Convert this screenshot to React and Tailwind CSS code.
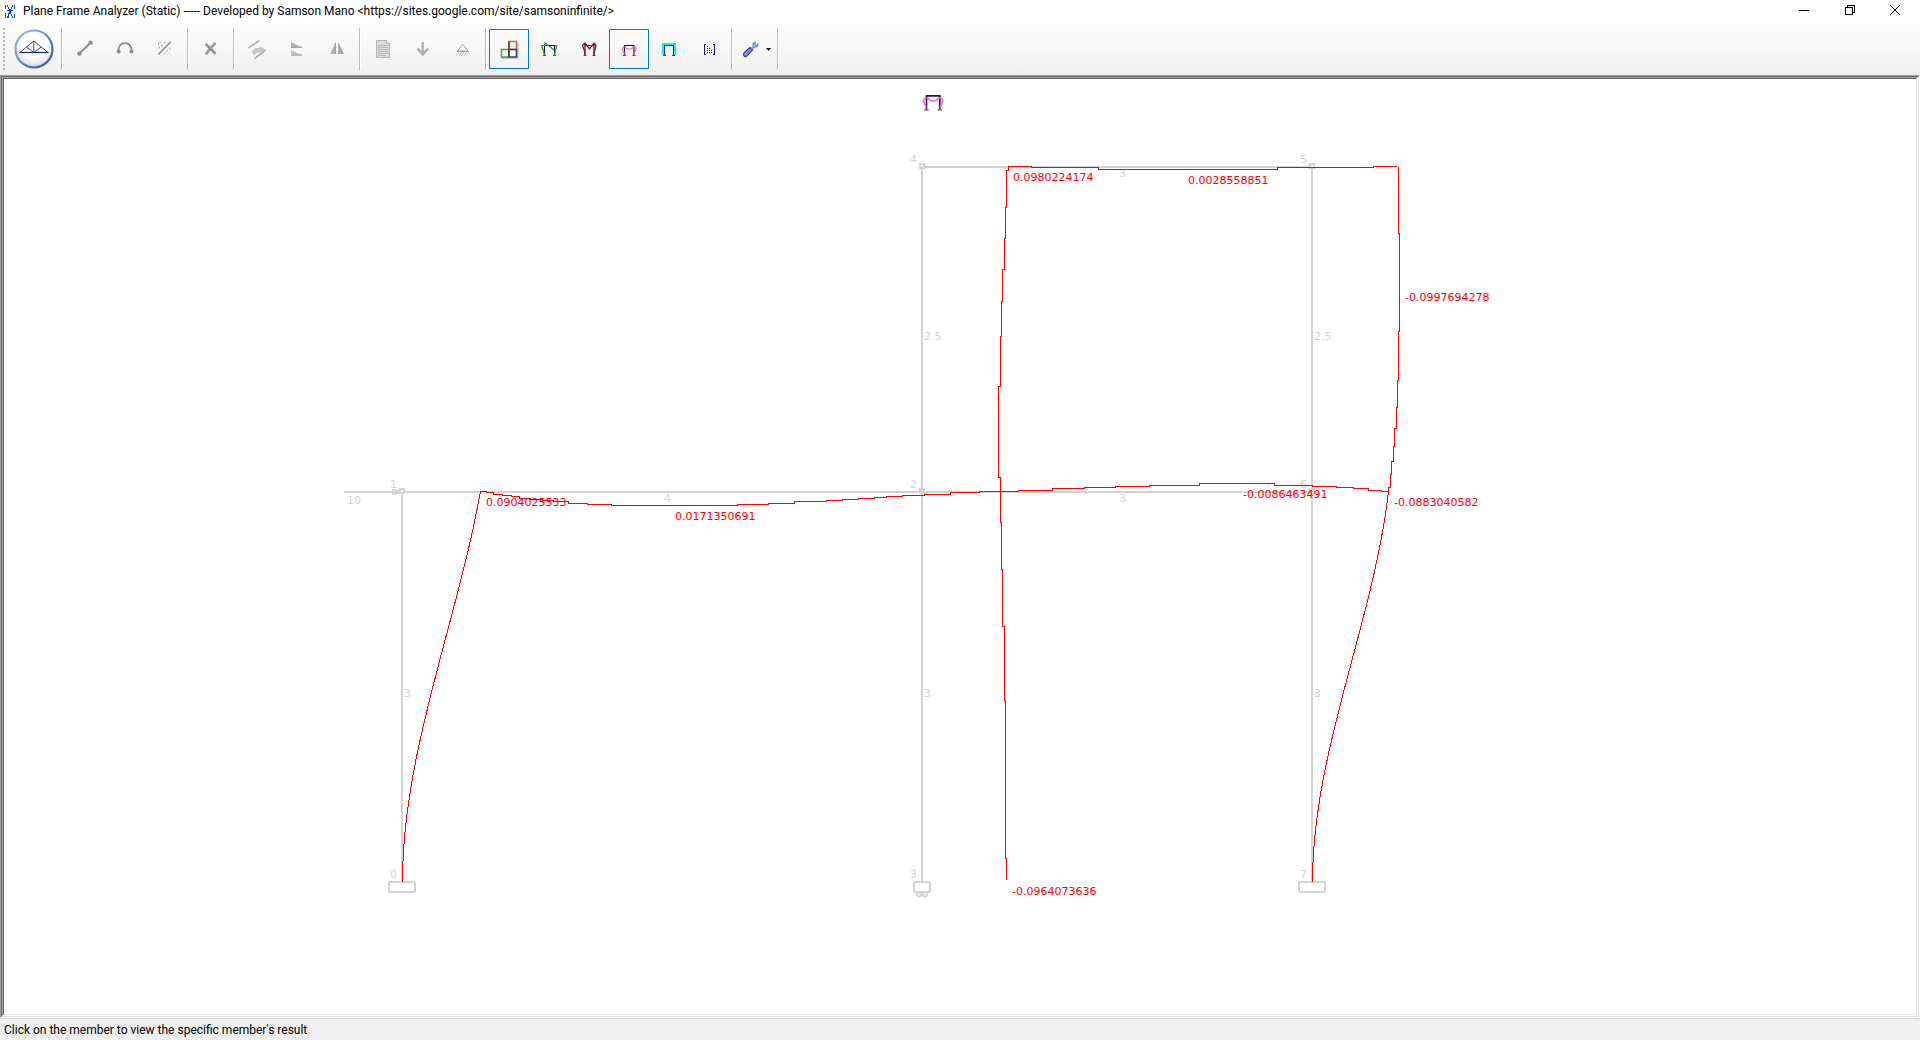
import React from 'react';

const NAVY = '#1c0f7a';

/* ---------- toolbar icons, 24 x 24 ---------- */

function Icon({ children, crisp }) {
  return (
    <svg viewBox="0 0 24 24" className="h-6 w-6 shrink-0" fill="none" shapeRendering={crisp ? 'crispEdges' : 'auto'} aria-hidden="true">
      {children}
    </svg>
  );
}

const LineIcon = () => (
  <Icon>
    <path d="M6.5 16.5L17.5 5.8" stroke="#8e8e8e" strokeWidth="2" />
    <circle cx="6.4" cy="16.6" r="2.2" fill="#8e8e8e" />
    <circle cx="17.6" cy="5.8" r="2.2" fill="#8e8e8e" />
  </Icon>
);

const ArcIcon = () => (
  <Icon>
    <path d="M5.5 14.5C5 9 8 6.2 12 6.2S19 9 18.6 14.5" stroke="#8e8e8e" strokeWidth="1.8" />
    <circle cx="5.6" cy="14.6" r="2" fill="#8e8e8e" />
    <circle cx="18.5" cy="14.6" r="2" fill="#8e8e8e" />
  </Icon>
);

const SplitIcon = () => (
  <Icon>
    <path d="M5.5 17.5L17.5 5" stroke="#8e8e8e" strokeWidth="1.8" />
    <path d="M5.5 11.5L12 5" stroke="#a9a9a9" strokeWidth="1.2" strokeDasharray="2 1.6" />
    <path d="M11 17L17.5 10.5" stroke="#b4b4b4" strokeWidth="1.2" strokeDasharray="2 1.6" />
    <path d="M5.5 8V5.5H8M9 9L10.5 10.5" stroke="#b4b4b4" />
    <path d="M13 19L16 16L19 19.5" stroke="#e2e2e2" />
  </Icon>
);

const DeleteIcon = () => (
  <Icon>
    <path d="M6.5 7C9 9 13 13 16.5 17" stroke="#8e8e8e" strokeWidth="2.6" />
    <path d="M16.5 6C12.5 10 9.5 13 7 17.5" stroke="#9a9a9a" strokeWidth="2.6" />
  </Icon>
);

const CopyMemberIcon = () => (
  <Icon>
    <path d="M3.3 11L14.5 3.7M9.5 21.8L20.6 13" stroke="#9b9b9b" strokeWidth="1.3" />
    <path d="M7 15L10 11.5H15V9.5L20.5 13.5L15 16.5V15H12L9.5 17.5Z" fill="#c9c9c9" stroke="#b2b2b2" strokeWidth="0.6" />
  </Icon>
);

const MirrorVIcon = () => (
  <Icon>
    <path d="M6 5L17.5 10.8H6Z" fill="#b4b4b4" />
    <path d="M6 9.7H17V10.8H6Z" fill="#9a9a9a" />
    <path d="M6 13L17.5 18.5H6Z" fill="#c4c4c4" />
    <path d="M6 17.5H17V18.6H6Z" fill="#a8a8a8" />
  </Icon>
);

const MirrorHIcon = () => (
  <Icon>
    <path d="M10.8 5V17H5Z" fill="#b8b8b8" />
    <path d="M9.6 7V17H10.8V5Z" fill="#9c9c9c" />
    <path d="M13.2 5V17H19Z" fill="#a6a6a6" />
  </Icon>
);

const PageIcon = () => (
  <Icon>
    <path d="M5.5 3.5H15.5L18.5 6.5V20.5H5.5Z" fill="#dcdcdc" stroke="#b4b4b4" />
    <path d="M15.5 3.5V6.5H18.5" stroke="#b4b4b4" fill="#f2f2f2" />
    <path d="M7 8.5H17M7 10.5H17M7 12.5H17M7 14.5H17M7 16.5H17M7 18.5H15" stroke="#b9b9b9" />
  </Icon>
);

const LoadIcon = () => (
  <Icon>
    <path d="M11.7 5V16" stroke="#b4b4b4" strokeWidth="2.6" />
    <path d="M6.5 11.5L11.7 17.5L17 11.5" stroke="#acacac" strokeWidth="2.4" />
  </Icon>
);

const SupportIcon = () => (
  <Icon>
    <path d="M11.7 7.3L6.5 14H17Z" stroke="#a2a2a2" />
    <path d="M5.5 14.5H18" stroke="#a2a2a2" />
    <path d="M8.5 14.5L5.5 18.5M11 14.5L8 18.5M13.5 14.5L10.5 18.5M16 14.5L13 18.5M18 15.5L15.5 18.5" stroke="#ababab" strokeWidth="0.9" />
  </Icon>
);

const MembersIcon = () => (
  <Icon>
    <path d="M5 21.3H20.8V5.5" stroke="#000" strokeOpacity="0.2" strokeWidth="1.6" />
    <rect x="12" y="4.5" width="7.5" height="8" fill="#fff" stroke="#c96f6f" strokeWidth="1.6" />
    <rect x="4.5" y="12.5" width="7.5" height="7.5" fill="#fff" stroke="#5d9b51" strokeWidth="1.6" />
    <rect x="12" y="12.5" width="7.5" height="7.5" fill="#fff" stroke="#3d3f86" strokeWidth="1.6" />
    <path d="M12 12.5V4.5" stroke="#8a2c2c" strokeWidth="1.6" />
    <path d="M12 20V12.5" stroke="#2f5f2a" strokeWidth="1.6" />
  </Icon>
);

const Portal = ({ x1 = 7.5, x2 = 17.5 }) => (
  <>
    <path d={`M${x1} 18V8.5H${x2}V18`} stroke={NAVY} strokeWidth="1.2" />
    <path d={`M${x1 - 1.5} 18.5H${x1 + 1.5}M${x2 - 1.5} 18.5H${x2 + 1.5}`} stroke="#8a3030" />
  </>
);

const ShearIcon = () => (
  <Icon>
    <Portal />
    <path d="M7.5 18L4.7 8.5H7.5L8 5.8L17.500 13.500M17.500 18L19.700 8.500H17.500" stroke="#3f8f2f" strokeWidth="1.2" />
  </Icon>
);

const MomentIcon = () => (
  <Icon>
    <Portal x1={8} x2={17} />
    <path d="M8 18L7.5 14L5.5 8.5L8 6L12.5 12L17 6L19 8.5L17.5 14L17 18" stroke="#8b1a2b" strokeWidth="1.3" />
  </Icon>
);

const DeflectionShape = () => (
  <>
    <Portal x1={7.5} x2={17} />
    <path d="M7.5 17.5C7.5 15 5 14 5.5 11.3C6 9.3 8.5 9.8 9.5 11.2C10.5 12.4 14 12.4 15 11.2C16 9.8 18.5 9.3 19 11.3C19.5 14 17 15 17 17.5" stroke="#ff4f96" strokeOpacity="0.75" strokeWidth="1.4" />
  </>
);

const DeflectionIcon = () => (
  <Icon>
    <DeflectionShape />
  </Icon>
);

const AxialIcon = () => (
  <Icon crisp>
    <path d="M6.5 18V7.5H17.5V18" stroke="#00f6ff" strokeWidth="3" />
    <path d="M7.500 18V8.500H16.500V18" stroke={NAVY} />
    <path d="M6 18.5H9M15 18.5H18" stroke="#8a3030" />
  </Icon>
);

const MatrixIcon = () => (
  <Icon crisp>
    <path d="M9 7.5H7.5V17.5H9M16 7.5H17.5V17.5H16" stroke={NAVY} />
    <path d="M10 9.5H11M10 11.5H13M10 13.5H15M10 15.5H15" stroke={NAVY} strokeDasharray="1 1" />
  </Icon>
);

const WrenchIcon = () => (
  <Icon>
    <path d="M5.5 19.5C3.5 17.5 5 15.5 7 14L11 10.5L13.5 13L10 16.5C9 18.5 7.5 20.5 5.5 19.5Z" fill="#7d92cf" stroke="#1e3278" strokeWidth="1.1" />
    <path d="M12 11.5L14.5 9C13 6.5 14.5 5.5 16.5 5L15.5 7L17.5 8.5L19 6.5C19.5 9.5 17.5 10.5 15.5 10L13 12.5" fill="#aab9e3" stroke="#5468a5" strokeWidth="0.9" />
  </Icon>
);

const TrussLogo = () => (
  <svg viewBox="0 0 40 40" className="h-10 w-10" fill="none" aria-hidden="true">
    <defs>
      <radialGradient id="ball" cx="0.5" cy="0.35" r="0.65">
        <stop offset="0.55" stopColor="#ffffff" />
        <stop offset="0.85" stopColor="#e6e7ea" />
        <stop offset="1" stopColor="#c8ccd6" />
      </radialGradient>
      <linearGradient id="rim" x1="0" y1="0" x2="1" y2="1">
        <stop offset="0" stopColor="#9cc3f0" />
        <stop offset="1" stopColor="#304f8c" />
      </linearGradient>
    </defs>
    <circle cx="20" cy="20" r="18.5" fill="url(#ball)" stroke="url(#rim)" strokeWidth="2.2" />
    <path d="M5.5 23.5H34.5" stroke="#16306f" strokeWidth="1.3" />
    <path d="M6 23.5L19.8 12L34 23.5M19.8 12V23.5M12.5 18L19.8 23.5L27 18" stroke="#2f4f97" />
  </svg>
);

const AppMark = () => (
  <svg viewBox="0 0 10 13" className="h-[13px] w-[10px]" fill="none" shapeRendering="crispEdges" aria-hidden="true">
    <path d="M0.5 0V4M9.5 0V4M2 0L5 6.5L8 0M5 6.5L2 13M5 6.5L8 13M2 5.5H8M0.5 8V13M9.5 9V13M3.5 11V13" stroke="#0a3cff" />
  </svg>
);

/* ---------- toolbar ---------- */

function ToolButton({ label, icon: Glyph, active, disabled }) {
  return (
    <button
      type="button"
      aria-label={label}
      title={label}
      disabled={disabled}
      className={`flex h-10 w-10 items-center justify-center border ${active ? 'border-[#0078d7]' : 'border-transparent'}`}
    >
      <Glyph />
    </button>
  );
}

const Separator = () => (
  <div className="flex h-[42px] w-[6px] justify-center">
    <div className="w-px bg-[#bdbdbd]" />
    <div className="w-px bg-white" />
  </div>
);

const GROUPS = [
  [
    { label: 'Add line member', icon: LineIcon, disabled: true },
    { label: 'Add arc member', icon: ArcIcon, disabled: true },
    { label: 'Split member', icon: SplitIcon, disabled: true },
  ],
  [{ label: 'Delete', icon: DeleteIcon, disabled: true }],
  [
    { label: 'Copy members', icon: CopyMemberIcon, disabled: true },
    { label: 'Mirror vertically', icon: MirrorVIcon, disabled: true },
    { label: 'Mirror horizontally', icon: MirrorHIcon, disabled: true },
  ],
  [
    { label: 'Member properties', icon: PageIcon, disabled: true },
    { label: 'Add load', icon: LoadIcon, disabled: true },
    { label: 'Add support', icon: SupportIcon, disabled: true },
  ],
  [
    { label: 'Frame', icon: MembersIcon, active: true },
    { label: 'Shear force', icon: ShearIcon },
    { label: 'Bending moment', icon: MomentIcon },
    { label: 'Deflection', icon: DeflectionIcon, active: true },
    { label: 'Axial force', icon: AxialIcon },
    { label: 'Matrix', icon: MatrixIcon },
  ],
];

function Toolbar() {
  return (
    <div role="toolbar" className="flex h-[52px] shrink-0 items-center bg-gradient-to-b from-[#fdfdfd] via-[#f7f7f7] to-[#f0f0f0]">
      <div className="ml-[3px] h-[42px] w-[2px] bg-[repeating-linear-gradient(to_bottom,#b8b8b8_0_2px,transparent_2px_4px)]" />
      <button type="button" aria-label="Analyze" className="ml-[9px] mr-[5px] h-10 w-10">
        <TrussLogo />
      </button>
      {GROUPS.map((group, i) => (
        <React.Fragment key={i}>
          <Separator />
          {group.map((tool) => (
            <ToolButton key={tool.label} {...tool} />
          ))}
        </React.Fragment>
      ))}
      <Separator />
      <button type="button" aria-label="Settings" className="flex h-10 w-10 items-center gap-[3px] pl-[4px]">
        <WrenchIcon />
        <svg viewBox="0 0 5 3" className="h-[3px] w-[5px]" aria-hidden="true">
          <path d="M0 0H5L2.5 3Z" fill="#000" />
        </svg>
      </button>
      <Separator />
    </div>
  );
}

/* ---------- drawing ---------- */

const MEMBERS =
  'M402 882V492M344 492H1312M922 882V167M922 167H1312M1312 882V167';

const LEFT_COLUMN = 'M402.5 881.5C402.5 751.5 457.5 621.5 480.5 491';

const RIGHT_COLUMN_LOWER = 'M1312.5 881.5C1312.5 751.5 1373.8 621.5 1388.5 491.5';

const BEAM_LOWER =
  'M480 491.5H486V492.5H493V494.5H502V495.5H511V496.5H519V498.5H530V499.5H542V500.5H553V501.5H568V503.5H587V504.5H611V505.5H737V504.5H768V503.5H794V501.5H826V500.5H842V499.5H858V498.5H874V497.5H886V496.5H902V495.5H924V494.5H950V492.5H979V491.5H1018V490.5H1052V488.5H1084V487.5H1115V486.5H1149V485.5H1199V483.5H1274V485.5H1312V486.5H1336V487.5H1353V488.5H1368V490.5H1381V491.5H1388';

const BEAM_UPPER = 'M1008 166.5H1031V167.5H1098V169.5H1277V167.5H1373V166.5H1397';

const MIDDLE_COLUMN =
  'M1008.5 166V170H1006.5V207H1005.5V238H1004.5V269H1002.5V301H1001.5V336H1000.5V386H998.5V477H1000.5V522H1001.5V569H1002.5V626H1004.5V700H1005.5V858H1006.5V880';

const RIGHT_COLUMN_UPPER =
  'M1398.5 167V233H1399.5V331H1398.5V380H1397.5V407H1396.5V428H1394.5V446H1393.5V461H1391.5V474H1390.5V487H1388.5V492';

const FRAME_LABELS = [
  [390, 488, '1'], [390, 878, '0'], [910, 163, '4'], [910, 488, '2'], [910, 878, '3'],
  [1300, 163, '5'], [1300, 488, '6'], [1300, 878, '7'],
  [347, 504, '10'], [664, 502, '4'], [1119, 502, '3'], [1119, 177, '3'],
  [924, 340, '2.5'], [1314, 340, '2.5'],
  [404, 697, '3'], [924, 697, '3'], [1314, 697, '3'],
];

const RESULT_LABELS = [
  [1013, 181, '0.0980224174'], [1188, 184, '0.0028558851'], [1405, 301, '-0.0997694278'],
  [486, 506, '0.0904025533'], [675, 520, '0.0171350691'], [1243, 498, '-0.0086463491'],
  [1394, 506, '-0.0883040582'], [1012, 895, '-0.0964073636'],
];

function FrameDrawing() {
  return (
    <svg viewBox="4 79 1912 935" className="block h-full w-full" fill="none" role="img" aria-label="Deflected shape of the frame">
      <g transform="translate(916 84) scale(1.4)">
        <DeflectionShape />
      </g>

      <g stroke="#d3d3d3" strokeWidth="2" shapeRendering="crispEdges">
        <path d={MEMBERS} />
        <rect x="400" y="489" width="4" height="4" fill="#fff" />
        <rect x="920" y="489" width="4" height="4" fill="#d3d3d3" />
        <rect x="1310" y="489" width="4" height="4" fill="#d3d3d3" />
        <rect x="920" y="164" width="4" height="4" fill="#fff" />
        <rect x="1310" y="164" width="4" height="4" fill="#fff" />
      </g>
      <path d="M392 489H395L400 490V493L395 495H392Z" fill="#d3d3d3" />
      <g stroke="#d3d3d3" strokeWidth="2">
        <rect x="389" y="882" width="26" height="10" rx="1" fill="#fff" />
        <rect x="914" y="882" width="16" height="10" rx="1" fill="#fff" />
        <rect x="1299" y="882" width="26" height="10" rx="1" fill="#fff" />
        <circle cx="919" cy="894.5" r="2" />
        <circle cx="925" cy="894.5" r="2" />
      </g>

      <g className="fill-[#d3d3d3] font-['DejaVu_Sans',sans-serif] text-[11px]">
        {FRAME_LABELS.map(([x, y, t]) => (
          <text key={`${x}-${y}`} x={x} y={y}>{t}</text>
        ))}
      </g>

      <g className="fill-[#ff0000] font-['DejaVu_Sans',sans-serif] text-[11px]">
        {RESULT_LABELS.map(([x, y, t]) => (
          <text key={t} x={x} y={y}>{t}</text>
        ))}
      </g>

      <g stroke="#ff0000" shapeRendering="crispEdges">
        <path d={LEFT_COLUMN} />
        <path d={RIGHT_COLUMN_LOWER} />
        <path d={BEAM_LOWER} />
        <path d={BEAM_UPPER} />
        <path d={MIDDLE_COLUMN} />
        <path d={RIGHT_COLUMN_UPPER} />
      </g>
    </svg>
  );
}

/* ---------- window ---------- */

function TitleBar() {
  return (
    <header className="flex h-[23px] shrink-0 items-start bg-white">
      <div className="flex h-[22px] min-w-0 flex-1 items-center gap-[8px] pl-[5px]">
        <AppMark />
        <h1 className="truncate text-[12px] leading-[18px]">
          Plane Frame Analyzer (Static) ----- Developed by Samson Mano &lt;https://sites.google.com/site/samsoninfinite/&gt;
        </h1>
      </div>
      <div className="flex h-5 pr-[2px]">
        <button type="button" aria-label="Minimize" className="flex w-[46px] items-center justify-center">
          <svg viewBox="0 0 10 10" className="h-[10px] w-[10px]" fill="none" stroke="#000" shapeRendering="crispEdges"><path d="M0 5.5H10" /></svg>
        </button>
        <button type="button" aria-label="Restore" className="flex w-[45px] items-center justify-center">
          <svg viewBox="0 0 10 10" className="h-[10px] w-[10px]" fill="none" stroke="#000" shapeRendering="crispEdges"><path d="M0.5 2.5H7.5V9.5H0.5ZM2.5 2V0.5H9.5V7.5H8" /></svg>
        </button>
        <button type="button" aria-label="Close" className="flex w-[46px] items-center justify-center">
          <svg viewBox="0 0 10 10" className="h-[10px] w-[10px]" fill="none" stroke="#000"><path d="M0 0L10 10M10 0L0 10" /></svg>
        </button>
      </div>
    </header>
  );
}

export default function App() {
  return (
    <div className="flex h-screen flex-col overflow-hidden bg-white font-['Roboto',sans-serif] text-black">
      <TitleBar />
      <Toolbar />
      <main className="min-h-0 flex-1 border border-b-white border-l-[#a0a0a0] border-r-white border-t-[#a0a0a0]">
        <div className="h-full border border-b-[#e3e3e3] border-l-[#696969] border-r-[#e3e3e3] border-t-[#696969]">
          <div className="h-full border border-b-white border-l-[#a0a0a0] border-r-white border-t-[#a0a0a0]">
            <div className="h-full border border-b-[#e3e3e3] border-l-[#696969] border-r-[#e3e3e3] border-t-[#696969] bg-white">
              <FrameDrawing />
            </div>
          </div>
        </div>
      </main>
      <footer className="flex h-[22px] shrink-0 items-center border-t border-[#d7d7d7] bg-[#f0f0f0] pl-[4px] text-[12px] leading-[18px]">
        Click on the member to view the specific member's result
      </footer>
    </div>
  );
}
